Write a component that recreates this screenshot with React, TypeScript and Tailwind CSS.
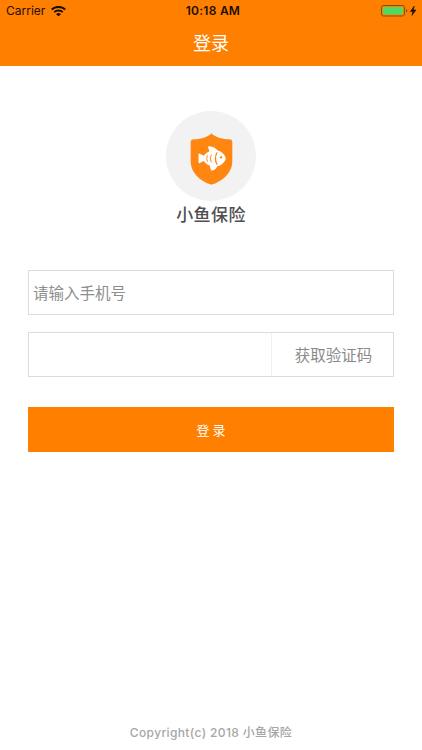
import { useState } from 'react'

function WifiIcon() {
  return (
    <svg width="15" height="11" viewBox="0 0 42 33" preserveAspectRatio="none" className="ml-[6px]" fill="none" stroke="#1c0e00">
      <path d="M2 10.500a27 27 0 0 1 38 0" strokeWidth="6" />
      <path d="M9 18.500a17 17 0 0 1 24 0" strokeWidth="5.5" />
      <path d="M14 24.500a10 10 0 0 1 14 0L21 31z" fill="#1c0e00" stroke="none" />
    </svg>
  )
}

function BatteryIcon() {
  return (
    <svg width="36" height="12" viewBox="0 0 36 12">
      <rect x="0.5" y="0.5" width="23" height="10.500" rx="2" fill="#ff8000" stroke="#8f4b06" />
      <rect x="2" y="2" width="20" height="7.500" rx="0.8" fill="#4cd964" />
      <path d="M25 4v3.600q1.300-.6 1.300-1.800T25 4z" fill="#8f4b06" />
      <path d="M33.300 1 29.300 6.600h2.500L30.900 10.500 35 4.900h-2.600z" fill="#1c0e00" stroke="#1c0e00" strokeWidth="0.5" />
    </svg>
  )
}

function StatusBar() {
  return (
    <div className="grid h-[22px] grid-cols-3 items-center pl-[6px] pr-[5px] font-['Inter','Liberation_Sans',sans-serif] text-[#1c0e00]">
      <div className="flex items-center">
        <span className="text-[12px]">Carrier</span>
        <WifiIcon />
      </div>
      <span className="pl-[3px] text-center text-[12px] font-semibold tracking-[0.25px]">10:18 AM</span>
      <div className="flex justify-end">
        <BatteryIcon />
      </div>
    </div>
  )
}

function ShieldFish() {
  return (
    <svg width="43" height="52" viewBox="92 85 126 156" preserveAspectRatio="none">
      <path
        d="M155 86C162 96 184 104 207 104Q216 104 216 113V169C216 207 184 232 155 240C126 232 94 207 94 169V113Q94 104 103 104C126 104 148 96 155 86Z"
        fill="#ff8610"
      />
      {/* fish silhouette, tail on the left */}
      <path
        d="M117 148Q117 145 121 147L132 153Q138 145 149 140L145 128Q144 124 149 125Q165 127 172 137Q189 142 196 157Q197 161 196 165Q189 180 172 185Q169 194 160 197Q154 199 153 195L150 183Q138 178 132 169L121 175Q117 177 117 173Z"
        fill="#fff"
      />
      <g fill="none" stroke="#ff8610" strokeLinecap="round">
        <path d="M143 153q-5 8 0 17" strokeWidth="2.800" />
        <path d="M154 151q-6 10 0 21" strokeWidth="2.800" />
        <path d="M171 144q-9 17 0 35" strokeWidth="3.500" />
      </g>
      <circle cx="183" cy="158" r="3.600" fill="#ff8610" />
    </svg>
  )
}

export default function App() {
  const [phone, setPhone] = useState('')
  const [code, setCode] = useState('')

  return (
    <div className="flex h-[750px] w-[422px] flex-col bg-white font-['Noto_Sans_CJK_SC',sans-serif]">
      <header className="h-[65.500px] shrink-0 bg-[#ff8000]">
        <StatusBar />
        <h1 className="mt-[6px] text-center text-[18px] leading-[28px] text-white">登录</h1>
      </header>

      <div className="mt-[45.500px] flex flex-col items-center">
        <div className="flex h-[90px] w-[90px] items-center justify-center rounded-full bg-[#f2f2f2] pt-[6px] pl-[1px]">
          <ShieldFish />
        </div>
        <h2 className="-mt-px text-[17px] font-medium leading-[28px] tracking-[0.4px] text-[#505050]">小鱼保险</h2>
      </div>

      <form className="mx-7 mt-[42px] flex flex-col" onSubmit={(e) => e.preventDefault()}>
        <input
          className="h-[45px] border border-[#dcdcdc] px-1 pb-[2px] text-[15.500px] text-[#444] outline-none placeholder:text-[#8e8e8e]"
          placeholder="请输入手机号"
          value={phone}
          onChange={(e) => setPhone(e.target.value)}
        />
        <div className="mt-[17px] flex h-[45px] border border-[#dcdcdc]">
          <input
            className="min-w-0 flex-1 px-1 text-[15.500px] text-[#444] outline-none"
            value={code}
            onChange={(e) => setCode(e.target.value)}
          />
          <button type="button" className="w-[122px] border-l border-[#f0f0f0] pl-[2px] text-[15.500px] text-[#8a8a8a]">
            获取验证码
          </button>
        </div>
        <button type="submit" className="mt-[30px] h-[45px] bg-[#ff8000] text-[13px] text-white">
          登 录
        </button>
      </form>

      <footer className="mt-auto pb-[7px] text-center font-['Inter','Noto_Sans_CJK_SC',sans-serif] text-[12px] font-medium leading-[20px] tracking-[0.370px] text-[#a6a6a6]">
        Copyright(c) 2018 小鱼保险
      </footer>
    </div>
  )
}
